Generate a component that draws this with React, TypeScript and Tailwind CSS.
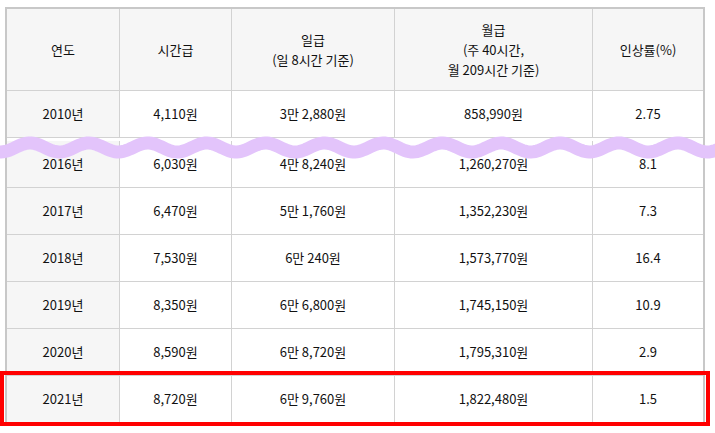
import React from 'react';

interface WageRow {
  year: string;
  hourly: string;
  daily: string;
  monthly: string;
  rate: string;
}

const rows: WageRow[] = [
  { year: '2010년', hourly: '4,110원', daily: '3만 2,880원', monthly: '858,990원', rate: '2.75' },
  { year: '2016년', hourly: '6,030원', daily: '4만 8,240원', monthly: '1,260,270원', rate: '8.1' },
  { year: '2017년', hourly: '6,470원', daily: '5만 1,760원', monthly: '1,352,230원', rate: '7.3' },
  { year: '2018년', hourly: '7,530원', daily: '6만 240원', monthly: '1,573,770원', rate: '16.4' },
  { year: '2019년', hourly: '8,350원', daily: '6만 6,800원', monthly: '1,745,150원', rate: '10.9' },
  { year: '2020년', hourly: '8,590원', daily: '6만 8,720원', monthly: '1,795,310원', rate: '2.9' },
  { year: '2021년', hourly: '8,720원', daily: '6만 9,760원', monthly: '1,822,480원', rate: '1.5' },
];

// 잘린 부분을 가리는 물결 모양
const wavePath = (() => {
  const pts: string[] = [];
  for (let x = -5; x <= 720; x += 2) {
    const y = 17.5 - 4.5 * Math.cos((2 * Math.PI * (x - 30)) / 58.9);
    pts.push(`${x},${y.toFixed(2)}`);
  }
  return 'M' + pts.join(' L');
})();

export default function App() {
  const cell = 'flex items-center justify-center text-center border-l border-[#d2d2d2]';

  return (
    <div
      className="relative w-[715px] h-[433px] bg-white text-[13px] text-[#111]"
      style={{ fontFamily: '"Noto Sans CJK KR", "Noto Sans", sans-serif' }}
    >
      <div className="absolute left-0 top-0 pt-[7px] pl-[5px]">
        <div className="w-[700px] border-2 border-[#c8c8c8]">
          {/* 헤더 */}
          <div className="grid grid-cols-[112px_112px_163px_198px_111px] h-[81px] bg-[#f6f6f6] leading-[20px]">
            <div className="flex items-center justify-center">연도</div>
            <div className={cell}>시간급</div>
            <div className={cell}>
              일급
              <br />
              (일 8시간 기준)
            </div>
            <div className={cell}>
              월급
              <br />
              (주 40시간,
              <br />
              월 209시간 기준)
            </div>
            <div className={cell}>인상률(%)</div>
          </div>

          {rows.map((row, i) => (
            <div
              key={row.year}
              className={`grid grid-cols-[112px_112px_163px_198px_111px] border-t border-[#d2d2d2] ${
                i === 1 ? 'h-[50px] pt-[3px]' : 'h-[47px]'
              }`}
            >
              <div className="flex items-center justify-center bg-[#f6f6f6]">{row.year}</div>
              <div className={cell}>{row.hourly}</div>
              <div className={cell}>{row.daily}</div>
              <div className={cell}>{row.monthly}</div>
              <div className={cell}>{row.rate}</div>
            </div>
          ))}
        </div>
      </div>

      {/* 물결 */}
      <svg className="absolute left-0 top-[130px]" width="715" height="35" viewBox="0 0 715 35">
        <path d={wavePath} fill="none" stroke="#e3c4fb" strokeWidth="13" />
      </svg>

      {/* 2021년 강조 박스 */}
      <div className="absolute left-0 top-[371px] w-[710px] h-[55px] border-4 border-[#ff0000]" />
    </div>
  );
}
